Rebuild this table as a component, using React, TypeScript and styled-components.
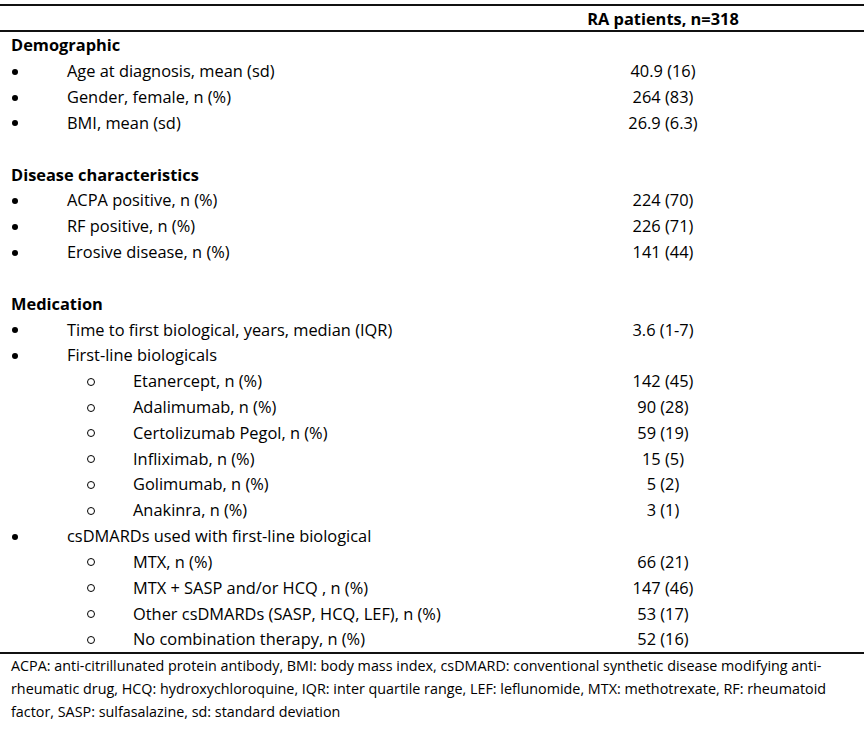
import React from "react";
import styled, { createGlobalStyle } from "styled-components";

const Global = createGlobalStyle`
  html, body { margin: 0; padding: 0; background: #fff; }
  body { font-family: "Open Sans", "Noto Sans", "Liberation Sans", sans-serif; color: #000; }
`;

const Page = styled.div`
  width: 866px;
  height: 730px;
  padding-top: 4px;
  box-sizing: border-box;
  background: #fff;
  overflow: hidden;
`;

const Table = styled.div`
  width: 864px;
  display: grid;
  grid-template-columns: 462px 402px;
  font-size: 16.4px;
`;

const HeadCell = styled.div<{ $align?: "left" | "center" }>`
  height: 24px;
  border-top: 2px solid #111;
  border-bottom: 2px solid #111;
  display: flex;
  align-items: center;
  justify-content: ${(p) => (p.$align === "center" ? "center" : "flex-start")};
  font-weight: 700;
`;

const Label = styled.div<{ $level: 0 | 1 | 2 }>`
  height: 25.83px;
  display: flex;
  align-items: center;
  padding-left: ${(p) => (p.$level === 0 ? 11 : p.$level === 1 ? 12 : 87)}px;
  font-weight: ${(p) => (p.$level === 0 ? 700 : 400)};
  white-space: nowrap;
`;

const Value = styled.div`
  height: 25.83px;
  display: flex;
  align-items: center;
  justify-content: center;
  white-space: nowrap;
`;

const Marker = styled.span<{ $kind: "disc" | "circle" }>`
  flex: none;
  box-sizing: border-box;
  width: ${(p) => (p.$kind === "disc" ? 6 : 8)}px;
  height: ${(p) => (p.$kind === "disc" ? 6 : 8)}px;
  border-radius: 50%;
  margin-top: 2px;
  background: ${(p) => (p.$kind === "disc" ? "#000" : "transparent")};
  border: ${(p) => (p.$kind === "disc" ? "none" : "1px solid #000")};
  margin-right: ${(p) => (p.$kind === "disc" ? 49 : 38)}px;
`;

const Rule = styled.div`
  grid-column: 1 / -1;
  border-top: 2px solid #111;
`;

const Footnote = styled.div`
  grid-column: 1 / -1;
  padding-left: 11px;
  font-size: 14.35px;
  line-height: 23px;
  white-space: nowrap;
`;

type Row = { label?: string; value?: string; level: 0 | 1 | 2 };

const rows: Row[] = [
  { label: "Demographic", level: 0 },
  { label: "Age at diagnosis, mean (sd)", value: "40.9 (16)", level: 1 },
  { label: "Gender, female, n (%)", value: "264 (83)", level: 1 },
  { label: "BMI, mean (sd)", value: "26.9 (6.3)", level: 1 },
  { level: 0 },
  { label: "Disease characteristics", level: 0 },
  { label: "ACPA positive, n (%)", value: "224 (70)", level: 1 },
  { label: "RF positive, n (%)", value: "226 (71)", level: 1 },
  { label: "Erosive disease, n (%)", value: "141 (44)", level: 1 },
  { level: 0 },
  { label: "Medication", level: 0 },
  { label: "Time to first biological, years, median (IQR)", value: "3.6 (1-7)", level: 1 },
  { label: "First-line biologicals", level: 1 },
  { label: "Etanercept, n (%)", value: "142 (45)", level: 2 },
  { label: "Adalimumab, n (%)", value: "90 (28)", level: 2 },
  { label: "Certolizumab Pegol, n (%)", value: "59 (19)", level: 2 },
  { label: "Infliximab, n (%)", value: "15 (5)", level: 2 },
  { label: "Golimumab, n (%)", value: "5 (2)", level: 2 },
  { label: "Anakinra, n (%)", value: "3 (1)", level: 2 },
  { label: "csDMARDs used with first-line biological", level: 1 },
  { label: "MTX, n (%)", value: "66 (21)", level: 2 },
  { label: "MTX + SASP and/or HCQ , n (%)", value: "147 (46)", level: 2 },
  { label: "Other csDMARDs (SASP, HCQ, LEF), n (%)", value: "53 (17)", level: 2 },
  { label: "No combination therapy, n (%)", value: "52 (16)", level: 2 },
];

const notes = [
  "ACPA: anti-citrillunated protein antibody, BMI: body mass index, csDMARD: conventional synthetic disease modifying anti-",
  "rheumatic drug, HCQ: hydroxychloroquine, IQR: inter quartile range, LEF: leflunomide, MTX: methotrexate, RF: rheumatoid",
  "factor, SASP: sulfasalazine, sd: standard deviation",
];

export default function App() {
  return (
    <>
      <Global />
      <Page>
        <Table>
          <HeadCell />
          <HeadCell $align="center">RA patients, n=318</HeadCell>
          {rows.map((r, i) => (
            <React.Fragment key={i}>
              <Label $level={r.level}>
                {r.level === 1 && r.label && <Marker $kind="disc" />}
                {r.level === 2 && <Marker $kind="circle" />}
                {r.label}
              </Label>
              <Value>{r.value}</Value>
            </React.Fragment>
          ))}
          <Rule />
          <Footnote>
            {notes.map((n, i) => (
              <div key={i}>{n}</div>
            ))}
          </Footnote>
        </Table>
      </Page>
    </>
  );
}
